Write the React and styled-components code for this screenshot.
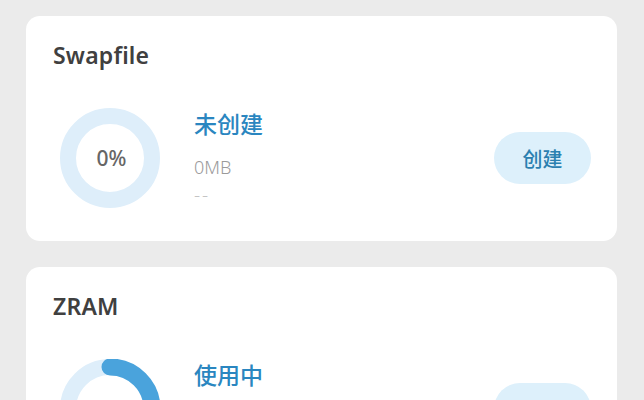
import React from "react";
import styled, { createGlobalStyle } from "styled-components";

const Global = createGlobalStyle`
  html, body { margin: 0; padding: 0; background: #ebebeb; }
  body { font-family: "Noto Sans", "Noto Sans CJK SC", sans-serif; }
`;

const Page = styled.div`
  display: flex;
  flex-direction: column;
  gap: 26px;
  padding: 16px 27px 0 26px;
  height: 400px;
  box-sizing: border-box;
  overflow: hidden;
`;

const Card = styled.section`
  background: #ffffff;
  border-radius: 14px;
  padding: 24px 26px 33px 27px;
  display: flex;
  flex-direction: column;
  flex-shrink: 0;
`;

const Title = styled.h2`
  margin: 0;
  font-size: 23px;
  line-height: 30px;
  font-weight: 600;
  letter-spacing: 0.2px;
  color: #404040;
`;

const Body = styled.div`
  margin-top: 38px;
  display: flex;
  align-items: center;
  height: 100px;
`;

const RingWrap = styled.div`
  position: relative;
  width: 100px;
  height: 100px;
  margin-left: 7px;
  flex-shrink: 0;
`;

const RingLabel = styled.span`
  position: absolute;
  inset: 0;
  display: flex;
  align-items: center;
  justify-content: center;
  font-size: 21px;
  font-weight: 500;
  color: #666;
  padding-left: 3px;
`;

const Info = styled.div`
  align-self: flex-start;
  margin-left: 34px;
  display: flex;
  flex-direction: column;
`;

const Status = styled.div`
  font-family: "Noto Sans CJK SC", sans-serif;
  font-size: 23px;
  line-height: 30px;
  font-weight: 500;
  color: #2a86c0;
`;

const Size = styled.div`
  margin-top: 17px;
  font-size: 18px;
  line-height: 24px;
  font-weight: 300;
  color: #9a9a9a;
`;

const Sub = styled.div`
  margin-top: 3px;
  font-size: 19px;
  line-height: 24px;
  font-weight: 300;
  color: #c4c4c4;
  letter-spacing: 2px;
`;

const ActionButton = styled.button`
  margin-left: auto;
  width: 97px;
  height: 52px;
  border: none;
  border-radius: 26px;
  background: #ddf0fb;
  color: #2b80b0;
  font-family: "Noto Sans CJK SC", sans-serif;
  font-size: 20px;
  font-weight: 500;
  display: flex;
  align-items: center;
  justify-content: center;
  padding: 0;
`;

function Ring({ percent, label }) {
  const r = 42;
  const c = 2 * Math.PI * r;
  return (
    <RingWrap>
      <svg width="100" height="100" viewBox="0 0 100 100">
        <circle cx="50" cy="50" r={r} fill="none" stroke="#deeefa" strokeWidth="16" />
        {percent > 0 && (
          <circle
            cx="50"
            cy="50"
            r={r}
            fill="none"
            stroke="#4aa3dc"
            strokeWidth="17"
            strokeLinecap="round"
            strokeDasharray={`${(c * percent) / 100} ${c}`}
            transform="rotate(-90 50 50)"
          />
        )}
      </svg>
      <RingLabel>{label}</RingLabel>
    </RingWrap>
  );
}

function MemCard({ title, percent, status, size, sub, action }) {
  return (
    <Card>
      <Title>{title}</Title>
      <Body>
        <Ring percent={percent} label={`${percent}%`} />
        <Info>
          <Status>{status}</Status>
          <Size>{size}</Size>
          <Sub>{sub}</Sub>
        </Info>
        <ActionButton>{action}</ActionButton>
      </Body>
    </Card>
  );
}

export default function App() {
  return (
    <>
      <Global />
      <Page>
        <MemCard title="Swapfile" percent={0} status="未创建" size="0MB" sub="--" action="创建" />
        <MemCard title="ZRAM" percent={36} status="使用中" size="1024MB" sub="--" action="调整" />
      </Page>
    </>
  );
}
